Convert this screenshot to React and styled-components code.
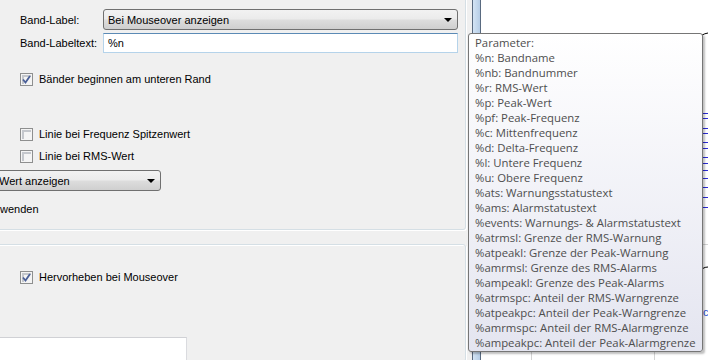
import styled, { createGlobalStyle } from "styled-components"

const GlobalStyle = createGlobalStyle`
  html, body {
    margin: 0;
    padding: 0;
  }
  body {
    background: #f0f0f0;
    font-family: "Liberation Sans", Arial, sans-serif;
  }
`

const Window = styled.div`
  position: relative;
  display: flex;
  width: 708px;
  height: 360px;
  overflow: hidden;
  background: #f0f0f0;
`

const SettingsPane = styled.div`
  width: 472px;
  flex-shrink: 0;
  overflow: hidden;
  font-size: 11px;
  color: #000;
`

const GroupBox = styled.div`
  display: flex;
  flex-direction: column;
  margin: ${p => p.$top}px 6px 0 -12px;
  padding: ${p => p.$padTop}px 0 ${p => p.$padBottom}px 31px;
  border: 1px solid #d5dfe5;
  border-radius: 3px;
  box-shadow: inset 1px 1px 0 #fff, 1px 1px 0 #fff;
`

const FieldRow = styled.div`
  display: flex;
  align-items: center;
  height: ${p => p.$h || 16}px;
  margin-top: ${p => p.$gap || 0}px;
  margin-left: ${p => p.$shift || 0}px;
  white-space: nowrap;
`

const FieldLabel = styled.span`
  width: 83px;
  flex-shrink: 0;
`

const Combo = styled.div`
  display: flex;
  align-items: center;
  justify-content: space-between;
  box-sizing: border-box;
  width: ${p => p.$w}px;
  height: 21px;
  padding: 0 5px 0 4px;
  border: 1px solid #707070;
  border-radius: 3px;
  background: linear-gradient(#f2f2f2 0%, #ebebeb 48%, #dddddd 52%, #cfcfcf 100%);
`

const Arrow = styled.span`
  width: 0;
  height: 0;
  border-left: 4px solid transparent;
  border-right: 4px solid transparent;
  border-top: 4px solid #000;
`

const TextBox = styled.div`
  display: flex;
  align-items: center;
  box-sizing: border-box;
  width: ${p => p.$w}px;
  height: ${p => p.$h}px;
  padding: 0 4px;
  background: #fff;
  border: 1px solid ${p => (p.$focused ? "#b5d3ea" : "#dadbdf")};
  border-top-color: ${p => (p.$focused ? "#5b8ab5" : "#d0d1d5")};
`

const CheckRow = styled.label`
  display: flex;
  align-items: center;
  gap: 6px;
  height: 16px;
  margin-top: ${p => p.$gap}px;
  white-space: nowrap;
`

const CheckBox = styled.span`
  display: flex;
  align-items: center;
  justify-content: center;
  box-sizing: border-box;
  width: 13px;
  height: 13px;
  border: 1px solid #8e8f8f;
  background: #f4f4f4;
  box-shadow: inset 0 0 0 1px #f4f4f4, inset 1px 1px 0 2px #c4c7cc;
`

const Splitter = styled.div`
  width: 7px;
  flex-shrink: 0;
  border-left: 1px solid #596a80;
  border-right: 1px solid #596a80;
  background: linear-gradient(90deg, #d4e4f4, #b6cde6);
`

const ChartPane = styled.div`
  flex: 1;
  background: #fff;
`

const Tooltip = styled.div`
  position: absolute;
  left: 468px;
  top: 33px;
  box-sizing: border-box;
  width: 235px;
  height: 319px;
  padding: 1px 6px;
  border: 1px solid #767676;
  border-radius: 3px;
  background: linear-gradient(#ffffff, #e4e5f0);
  box-shadow: 2px 2px 2px rgba(0, 0, 0, 0.25);
  font-family: "Open Sans", "Noto Sans", sans-serif;
  font-size: 11.35px;
  line-height: 15px;
  color: #4e4e4e;
  white-space: nowrap;
`

const TipLine = styled.div``

const params = [
  "Parameter:",
  "%n: Bandname",
  "%nb: Bandnummer",
  "%r: RMS-Wert",
  "%p: Peak-Wert",
  "%pf: Peak-Frequenz",
  "%c: Mittenfrequenz",
  "%d: Delta-Frequenz",
  "%l: Untere Frequenz",
  "%u: Obere Frequenz",
  "%ats: Warnungsstatustext",
  "%ams: Alarmstatustext",
  "%events: Warnungs- & Alarmstatustext",
  "%atrmsl: Grenze der RMS-Warnung",
  "%atpeakl: Grenze der Peak-Warnung",
  "%amrmsl: Grenze des RMS-Alarms",
  "%ampeakl: Grenze des Peak-Alarms",
  "%atrmspc: Anteil der RMS-Warngrenze",
  "%atpeakpc: Anteil der Peak-Warngrenze",
  "%amrmspc: Anteil der RMS-Alarmgrenze",
  "%ampeakpc: Anteil der Peak-Alarmgrenze",
]

const blueMarks = [113, 118, 128, 133, 142, 148, 157, 163, 170, 178, 187, 197, 207]

const Check = ({ checked }) => (
  <CheckBox>
    {checked && (
      <svg width="9" height="9" viewBox="0 0 9 9">
        <path d="M1 4.5 L3.5 7.5 L8 1" fill="none" stroke="#4a5f97" strokeWidth="1.8" />
      </svg>
    )}
  </CheckBox>
)

const Chart = () => (
  <svg width="227" height="360" viewBox="0 0 227 360">
    <path d="M216 40 Q220 34 227 33" fill="none" stroke="#000" strokeWidth="1" />
    {blueMarks.map(y => (
      <line key={y} x1="221" y1={y + 0.5} x2="227" y2={y + 0.5} stroke="#2b2bd8" strokeWidth="1" />
    ))}
    <path d="M218 273 Q221 267 227 267" fill="none" stroke="#000" strokeWidth="1" />
    <line x1="0" y1="244.5" x2="227" y2="244.5" stroke="#d4d4d4" />
    <line x1="50.5" y1="244" x2="50.5" y2="360" stroke="#d4d4d4" />
    <line x1="173.5" y1="244" x2="173.5" y2="360" stroke="#d4d4d4" />
    <text x="222" y="316" fontSize="11" fill="#2b4fd8" fontFamily="Liberation Sans">c</text>
  </svg>
)

export default function App() {
  return (
    <>
      <GlobalStyle />
      <Window>
        <SettingsPane>
          <GroupBox $top={-20} $padTop={28} $padBottom={12}>
            <FieldRow $h={21}>
              <FieldLabel>Band-Label:</FieldLabel>
              <Combo $w={355}>
                <span>Bei Mouseover anzeigen</span>
                <Arrow />
              </Combo>
            </FieldRow>
            <FieldRow $h={20} $gap={3}>
              <FieldLabel>Band-Labeltext:</FieldLabel>
              <TextBox $w={355} $h={20} $focused>%n</TextBox>
            </FieldRow>
            <CheckRow $gap={18}>
              <Check checked />
              Bänder beginnen am unteren Rand
            </CheckRow>
            <CheckRow $gap={39}>
              <Check />
              Linie bei Frequenz Spitzenwert
            </CheckRow>
            <CheckRow $gap={6}>
              <Check />
              Linie bei RMS-Wert
            </CheckRow>
            <FieldRow $h={21} $gap={6} $shift={-26}>
              <Combo $w={167}>
                <span>Wert anzeigen</span>
                <Arrow />
              </Combo>
            </FieldRow>
            <FieldRow $gap={10} $shift={-20}>wenden</FieldRow>
          </GroupBox>
          <GroupBox $top={14} $padTop={24} $padBottom={0}>
            <CheckRow $gap={0}>
              <Check checked />
              Hervorheben bei Mouseover
            </CheckRow>
            <FieldRow $h={24} $gap={52} $shift={-30}>
              <TextBox $w={197} $h={24} />
            </FieldRow>
          </GroupBox>
        </SettingsPane>
        <Splitter />
        <ChartPane>
          <Chart />
        </ChartPane>
        <Tooltip>
          {params.map(p => (
            <TipLine key={p}>{p}</TipLine>
          ))}
        </Tooltip>
      </Window>
    </>
  )
}
